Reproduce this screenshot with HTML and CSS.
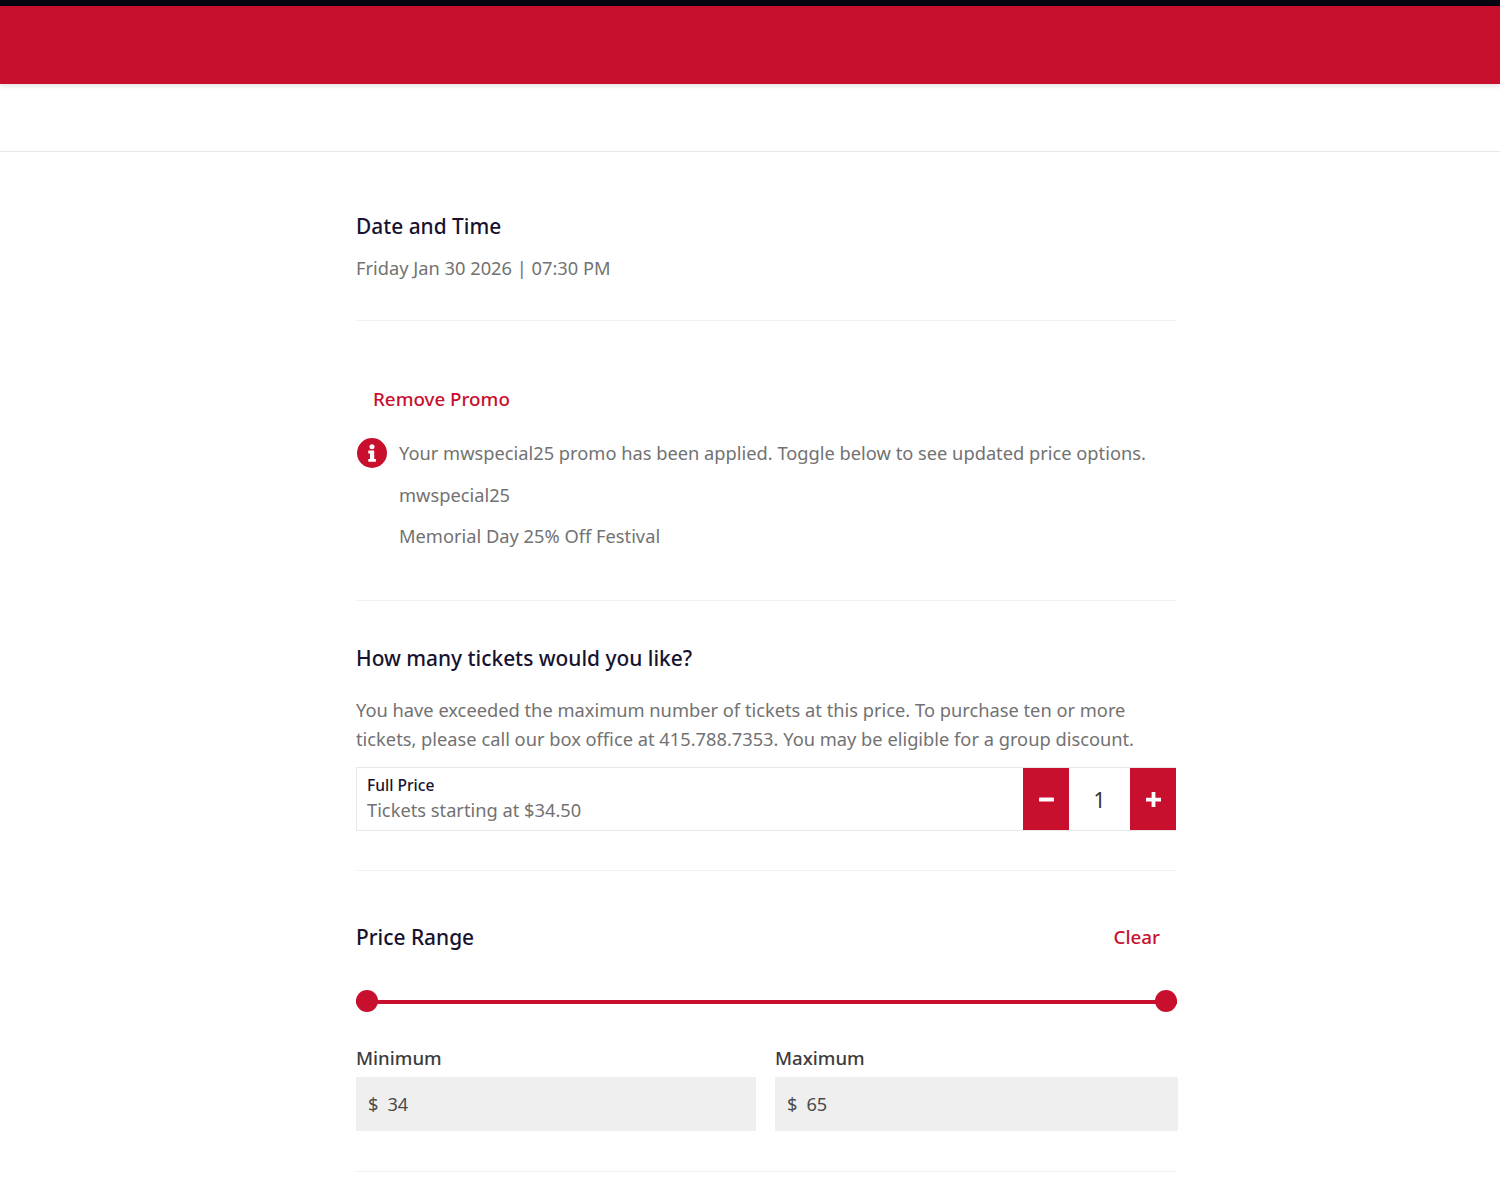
FILE: index.html
```html
<!DOCTYPE html>
<html lang="en">
<head>
<meta charset="utf-8">
<title>Tickets</title>
<link rel="stylesheet" href="styles.css">
</head>
<body>
<div class="topline"></div>
<header class="brand"></header>
<nav class="subnav"></nav>
<main class="content">
  <section class="block block-date">
    <h2 class="title">Date and Time</h2>
    <p class="text date-text">Friday Jan 30 2026 | 07:30 PM</p>
  </section>
  <section class="block block-promo">
    <a class="link remove">Remove Promo</a>
    <div class="promo-row">
      <svg class="info" viewBox="0 0 30 30" aria-hidden="true"><circle cx="15" cy="15" r="15" fill="#c8102e"/><circle cx="15" cy="8.8" r="2.5" fill="#fff"/><path d="M11.3 12.6h5.9v8.4h1.7v2.8h-7.6V21h1.7v-5.6h-1.7z" fill="#fff"/></svg>
      <div class="promo-lines">
        <p class="text">Your mwspecial25 promo has been applied. Toggle below to see updated price options.</p>
        <p class="text">mwspecial25</p>
        <p class="text">Memorial Day 25% Off Festival</p>
      </div>
    </div>
  </section>
  <section class="block block-qty">
    <h2 class="title">How many tickets would you like?</h2>
    <p class="text notice">You have exceeded the maximum number of tickets at this price. To purchase ten or more tickets, please call our box office at 415.788.7353. You may be eligible for a group discount.</p>
    <div class="ticket">
      <div class="ticket-info">
        <div class="ticket-name">Full Price</div>
        <div class="text ticket-price">Tickets starting at $34.50</div>
      </div>
      <button class="step" aria-label="Decrease"><svg viewBox="0 0 16 16" class="step-icon"><rect x="0" y="5.8" width="16" height="4.4" rx="1" fill="#fff"/></svg></button>
      <div class="count">1</div>
      <button class="step" aria-label="Increase"><svg viewBox="0 0 16 16" class="step-icon"><path d="M6 0h4v6h6v4h-6v6H6v-6H0V6h6z" fill="#fff"/></svg></button>
    </div>
  </section>
  <section class="block block-range">
    <div class="range-head">
      <h2 class="title">Price Range</h2>
      <a class="link clear">Clear</a>
    </div>
    <div class="slider"><span class="thumb thumb-min"></span><span class="thumb thumb-max"></span></div>
    <div class="fields">
      <div class="field"><div class="field-label">Minimum</div><div class="field-input"><span>$</span><span>34</span></div></div>
      <div class="field"><div class="field-label">Maximum</div><div class="field-input"><span>$</span><span>65</span></div></div>
    </div>
  </section>
</main>
</body>
</html>
```

FILE: styles.css
```css
* { box-sizing: border-box; }
html, body { margin: 0; padding: 0; }
body { background: #fff; font-family: "Noto Sans", "Open Sans", sans-serif; color: #6f6f6f; height: 1194px; overflow: hidden; }
.topline { height: 6px; background: #05060f; }
.brand { height: 78px; background: #c8102e; box-shadow: 0 2px 5px rgba(0,0,0,.12); position: relative; }
.subnav { height: 68px; border-bottom: 1px solid #e8e8e8; }
.content { width: 821px; margin-left: 356px; }
.block { border-bottom: 1px solid #f2f2f2; margin-right: 1px; }
.title { margin: 0; font-size: 20.9px; line-height: 28px; font-weight: 500; color: #17132f; }
.text { margin: 0; font-size: 18.27px; line-height: 29px; color: #727272; }
.link { color: #c8102e; font-size: 18.8px; line-height: 28px; font-weight: 500; }
.block-date { height: 169px; padding-top: 60px; }
.date-text { margin-top: 13px; }
.block-promo { height: 280px; padding-top: 64px; }
.remove { display: block; margin-left: 17px; }
.promo-row { display: flex; gap: 12px; margin-top: 25px; }
.info { width: 30px; height: 30px; flex: none; margin: 0 0 0 .5px; }
.promo-lines { display: flex; flex-direction: column; gap: 12.5px; padding-left: .5px; }
.block-qty { height: 270px; padding-top: 43px; }
.notice { margin-top: 23px; }
.ticket { display: flex; align-items: stretch; height: 64px; margin-top: 14px; border: 1px solid #e8e8e8; border-right: 0; }
.ticket-info { flex: 1; padding: 6px 10px; }
.ticket-name { font-size: 15.6px; line-height: 22px; font-weight: 500; color: #17132f; }
.ticket-price { line-height: 27px; }
.step { width: 46px; border: 0; padding: 0; background: #c8102e; display: flex; align-items: center; justify-content: center; }
.step-icon { width: 15px; height: 15px; }
.count { width: 61px; display: flex; align-items: center; justify-content: center; font-size: 21px; color: #333; padding-top: 1px; }
.block-range { height: 301px; padding-top: 52px; margin-right: 1px; }
.range-head { display: flex; justify-content: space-between; align-items: center; padding-right: 16px; }
.slider { height: 4px; margin: 49px -1px 0 0; background: #c8102e; position: relative; }
.thumb { position: absolute; top: -10px; width: 22px; height: 22px; border-radius: 50%; background: #c8102e; }
.thumb-min { left: 0; }
.thumb-max { right: 0; }
.fields { display: grid; grid-template-columns: 400px 403px; gap: 19px; margin-top: 41px; margin-right: -1px; }
.field-label { font-size: 18.6px; line-height: 26px; font-weight: 500; color: #3c3c3c; }
.field-input { height: 54px; margin-top: 6px; background: #efefef; display: flex; align-items: center; gap: 9px; padding-left: 12px; font-size: 18.2px; color: #4a4a4a; }
```
